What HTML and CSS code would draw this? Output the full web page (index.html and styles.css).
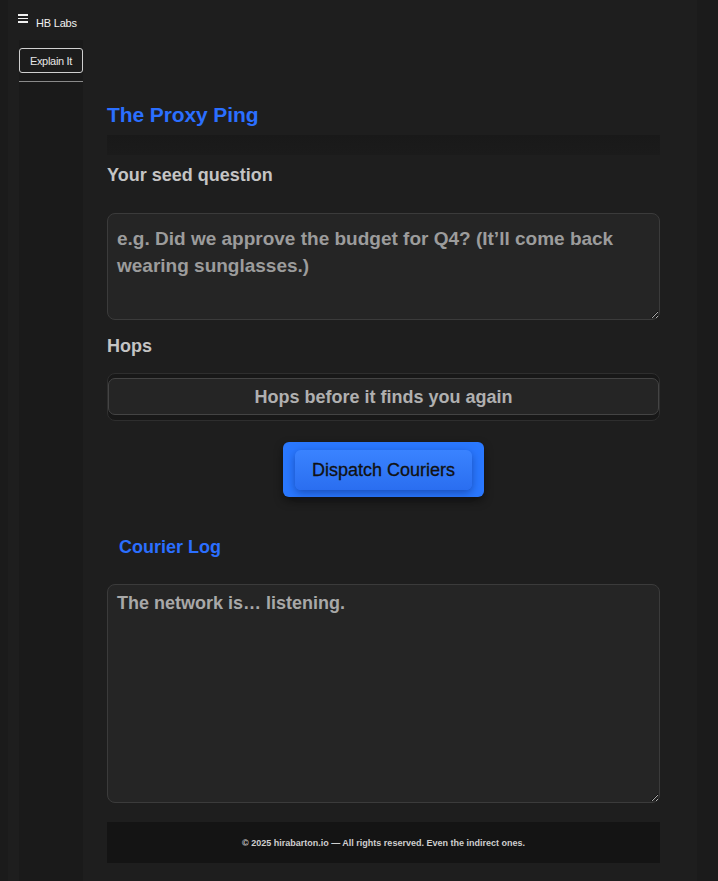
FILE: index.html
```html
<!DOCTYPE html>
<html>
<head>
<meta charset="utf-8">
<link rel="stylesheet" href="styles.css">
</head>
<body>
<div class="page">
  <header class="topbar">
    <span class="burger"><i></i><i></i><i></i></span>
    <span class="brand">HB Labs</span>
  </header>
  <div class="layout">
    <aside class="sidebar">
      <button class="explain">Explain It</button>
      <div class="side-rule"></div>
    </aside>
    <main class="main">
      <h1 class="title">The Proxy Ping</h1>
      <div class="title-bar"></div>
      <label class="label">Your seed question</label>
      <textarea class="field seed" placeholder="e.g. Did we approve the budget for Q4? (It’ll come back wearing sunglasses.)"></textarea>
      <label class="label hops-label">Hops</label>
      <div class="select-wrap">
        <div class="select">Hops before it finds you again</div>
      </div>
      <div class="actions">
        <div class="dispatch-outer"><button class="dispatch">Dispatch Couriers</button></div>
      </div>
      <h2 class="log-title">Courier Log</h2>
      <textarea class="field log">The network is… listening.</textarea>
      <footer class="footer">© 2025 hirabarton.io — All rights reserved. Even the indirect ones.</footer>
    </main>
  </div>
</div>
</body>
</html>
```
FILE: styles.css
```css
html, body {
  margin: 0;
  padding: 0;
  background: #1b1b1b;
  font-family: "Liberation Sans", Arial, sans-serif;
}
.page {
  margin-left: 8px;
  width: 689px;
  min-height: 881px;
  background: #1e1e1e;
  box-sizing: border-box;
}
.topbar {
  height: 40px;
  display: flex;
  align-items: flex-start;
  padding-left: 10px;
  box-sizing: border-box;
}
.burger {
  display: flex;
  flex-direction: column;
  gap: 2px;
  width: 10px;
  margin-top: 14px;
}
.burger i {
  display: block;
  height: 1.5px;
  background: #f0f0f0;
}
.brand {
  color: #f2f2f2;
  font-size: 11px;
  margin-top: 17px;
  margin-left: 8px;
  letter-spacing: -0.2px;
}
.layout {
  display: flex;
  align-items: stretch;
  min-height: 841px;
}
.sidebar {
  width: 64px;
  margin-left: 11px;
  background: #1a1a1a;
  padding-top: 8px;
  box-sizing: border-box;
}
.explain {
  display: block;
  width: 64px;
  height: 25px;
  background: #1c1c1c;
  color: #e6e6e6;
  border: 1px solid #cfcfcf;
  border-radius: 3px;
  font-family: inherit;
  font-size: 11px;
  letter-spacing: -0.3px;
  padding: 0;
}
.side-rule {
  height: 1px;
  background: #8a8a8a;
  margin-top: 8px;
}
.main {
  width: 590px;
  padding: 62px 13px 0 24px;
  box-sizing: border-box;
}
.title {
  margin: 0;
  color: #2b6fff;
  font-size: 21px;
  line-height: 26px;
  font-weight: bold;
  letter-spacing: -0.1px;
}
.title-bar {
  height: 20px;
  background: linear-gradient(#191919, #1b1b1b);
  margin-top: 7px;
}
.label {
  display: block;
  color: #c4c4c4;
  font-size: 18px;
  font-weight: bold;
  line-height: 24px;
  margin-top: 8px;
}
.field {
  display: block;
  width: 553px;
  box-sizing: border-box;
  background: #252525;
  border: 1px solid #3b3b3b;
  border-radius: 8px;
  color: #a8a8a8;
  font-family: inherit;
  font-weight: bold;
  resize: vertical;
  outline: none;
}
.seed {
  margin-top: 26px;
  height: 107px;
  padding: 11px 9px;
  font-size: 19px;
  line-height: 27px;
}
.seed::placeholder {
  color: #9c9c9c;
}
.hops-label {
  margin-top: 14px;
}
.select-wrap {
  margin-top: 15px;
  height: 48px;
  background: #181818;
  border: 1px solid #2e2e2e;
  border-radius: 8px;
  box-sizing: border-box;
  padding-top: 4px;
}
.select {
  height: 37px;
  box-sizing: border-box;
  background: #252525;
  border: 1px solid #444;
  border-radius: 7px;
  color: #b0b0b0;
  font-size: 18px;
  font-weight: bold;
  text-align: center;
  line-height: 36px;
}
.actions {
  display: flex;
  justify-content: center;
  margin-top: 21px;
}
.dispatch-outer {
  background: #2a78ff;
  border-radius: 6px;
  padding: 8px 12px 7px;
  box-shadow: 0 4px 10px rgba(0,0,0,0.45);
}
.dispatch {
  display: block;
  width: 177px;
  height: 40px;
  border: none;
  border-radius: 6px;
  background: linear-gradient(#3a83ff, #2a6ef0);
  box-shadow: 0 3px 8px rgba(10,40,120,0.5);
  color: #111;
  font-family: inherit;
  font-size: 18px;
  padding: 0;
  -webkit-text-stroke: 0.3px #111;
}
.log-title {
  margin: 38px 0 0 12px;
  color: #2b6fff;
  font-size: 18px;
  line-height: 24px;
  font-weight: bold;
}
.log {
  margin-top: 25px;
  height: 219px;
  padding: 6px 9px;
  font-size: 18px;
  line-height: 24px;
}
.footer {
  margin-top: 19px;
  height: 41px;
  background: #141414;
  color: #cfcfcf;
  font-size: 9px;
  font-weight: bold;
  text-align: center;
  line-height: 42px;
}
```
